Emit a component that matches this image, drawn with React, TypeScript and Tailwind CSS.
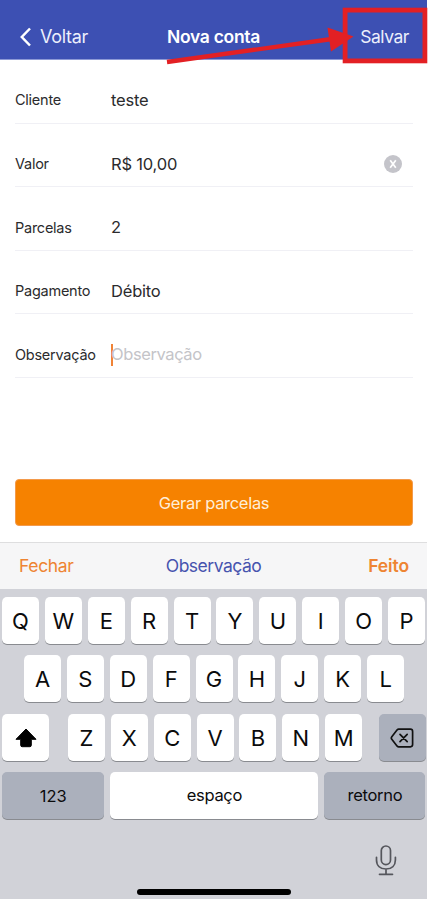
import React, { useState } from 'react';

interface Field {
    id: string;
    label: string;
    value: string;
    clearable?: boolean;
}

const fields: Field[] = [
    { id: 'cliente', label: 'Cliente', value: 'teste' },
    { id: 'valor', label: 'Valor', value: 'R$ 10,00', clearable: true },
    { id: 'parcelas', label: 'Parcelas', value: '2' },
    { id: 'pagamento', label: 'Pagamento', value: 'Débito' },
    { id: 'observacao', label: 'Observação', value: '' }
];

const Header = () => (
    <header className="relative flex h-[60px] items-start justify-between border-b border-[#8d99d6] bg-[#3d50b3] pt-[25px] pr-[18px] pl-5 text-[18px] leading-6 text-[#eceffc]">
        <button className="flex items-center gap-[9px] tracking-[-0.3px]">
            <svg width="11" height="20" viewBox="0 0 11 20" fill="none" stroke="white" strokeWidth="2.5">
                <path d="M10 1.5 1.8 10 10 18.5" />
            </svg>
            Voltar
        </button>
        <h1 className="absolute left-0 w-full text-center text-[17.5px] font-semibold tracking-[-0.3px] text-white">Nova conta</h1>
        <button className="relative text-[17.5px] tracking-[-0.45px]">Salvar</button>

        {/* Arrow and frame pointing at the save action */}
        <svg className="pointer-events-none absolute top-0 left-0" width="428" height="66" viewBox="0 0 428 66" fill="none">
            <rect x="345.1" y="10.1" width="79.8" height="50.8" stroke="#e32024" strokeWidth="4.8" />
            <path d="M167 62 332 39" stroke="#e32024" strokeWidth="4.4" />
            <path d="M327.5 27.5 353.5 36.5 331 51.5Z" fill="#e32024" />
        </svg>
    </header>
);

const FieldRow = ({ field, onClear }: { field: Field; onClear: () => void }) => (
    <div className="flex h-[63.6px] items-center border-b border-[#f0f0f5] pt-[18px] text-[#2b2b2d]">
        <label className="w-24 shrink-0 text-[14.5px] tracking-[-0.25px]">{field.label}</label>
        {field.value ? (
            <span className="text-[16.5px] tracking-[-0.2px]">{field.value}</span>
        ) : (
            <span className="flex items-center text-[16.5px] tracking-[-0.4px] text-[#c4c4c8]">
                <span className="-mr-0.5 h-[22px] w-0.5 bg-[#f08336]"></span>
                {field.label}
            </span>
        )}
        {field.clearable && field.value && (
            <button onClick={onClear} className="mr-[11px] ml-auto">
                <svg width="18" height="18" viewBox="0 0 18 18">
                    <circle cx="9" cy="9" r="9" fill="#c4c4ca" />
                    <path d="M6.2 5.2 11.8 12.8M11.8 5.2 6.2 12.8" stroke="white" strokeWidth="1.7" />
                </svg>
            </button>
        )}
    </div>
);

const Key = ({ children, className = 'w-[37px] bg-white pt-0.5 text-[22px]' }: { children: React.ReactNode; className?: string }) => (
    <button className={`flex h-[47px] shrink-0 items-center justify-center rounded-[5px] text-[#0b0b0c] shadow-[0_1px_0_#898b90] ${className}`}>
        {children}
    </button>
);

const Keyboard = () => (
    <div className="flex grow flex-col bg-[#d1d2d8] px-0.5 pt-2">
        <div className="flex flex-col gap-[11.4px]">
            <div className="flex gap-[5.9px]">
                {[...'QWERTYUIOP'].map((k) => <Key key={k}>{k}</Key>)}
            </div>
            <div className="flex gap-[5.9px] pl-[22px]">
                {[...'ASDFGHJKL'].map((k) => <Key key={k}>{k}</Key>)}
            </div>
            <div className="flex">
                <Key className="w-[47px] bg-white pt-px">
                    <svg width="22" height="20" viewBox="0 0 22 20">
                        <path d="M11 1 21 11.3H16.3V17.2Q16.3 18.7 14.8 18.7H7.2Q5.7 18.7 5.7 17.2V11.3H1Z" fill="black" stroke="black" strokeWidth="1" strokeLinejoin="round" />
                    </svg>
                </Key>
                <div className="mr-[16.8px] ml-[18.9px] flex gap-[5.9px]">
                    {[...'ZXCVBNM'].map((k) => <Key key={k}>{k}</Key>)}
                </div>
                <Key className="w-[46.5px] bg-[#abb0bc] pt-px">
                    <svg width="24" height="20" viewBox="0 0 24 20" fill="none" stroke="#111" strokeWidth="1.7" strokeLinejoin="round" strokeLinecap="round">
                        <path d="M8.6 1.2H20.4Q22.6 1.2 22.6 3.4V16.6Q22.6 18.8 20.4 18.8H8.6Q7.8 18.8 7.2 18.2L1.8 11.3Q.8 10 1.8 8.7L7.2 1.8Q7.8 1.2 8.6 1.2Z" />
                        <path d="M10 6.3 17.2 13.7M17.2 6.3 10 13.7" />
                    </svg>
                </Key>
            </div>
            <div className="flex gap-[6px]">
                <Key className="w-[102.4px] bg-[#abb0bc] pt-0.5 text-[16.5px]">123</Key>
                <Key className="w-[208px] bg-white text-[16.5px] tracking-[-0.3px]">espaço</Key>
                <Key className="w-[101px] bg-[#abb0bc] text-[16.5px] tracking-[-0.3px]">retorno</Key>
            </div>
        </div>
        <svg className="mt-[26px] mr-[28.5px] self-end" width="22" height="31" viewBox="0 0 22 31" fill="none" stroke="#55565c" strokeWidth="1.7" strokeLinecap="round">
            <rect x="6.3" y="1" width="9.2" height="18.6" rx="4.6" />
            <path d="M1.5 12.3V15C1.5 20.5 5.3 24 11 24S20.4 20.5 20.4 15V12.3M11 24V29.3M4.5 29.3H17.5" />
        </svg>
        <div className="mt-[13px] ml-[135px] h-[5.5px] w-[154px] rounded-full bg-black"></div>
    </div>
);

export default function App() {
    const [items, setItems] = useState(fields);

    const clear = (id: string) => setItems(items.map((f) => (f.id === id ? { ...f, value: '' } : f)));

    return (
        <div className="h-[899px] w-[428px] bg-white font-['Inter','Liberation_Sans',sans-serif]">
            <div className="flex h-full w-[427px] flex-col">
                <Header />
                <main className="flex h-[482px] shrink-0 flex-col pr-3.5 pl-[15px]">
                    {items.map((field) => (
                        <FieldRow key={field.id} field={field} onClear={() => clear(field.id)} />
                    ))}
                    <button className="mt-auto mb-4 h-[47px] rounded-[4px] border border-[#f39a4b] bg-[#f68200] pt-px text-[16.5px] tracking-[-0.3px] text-[#ffeed8]">
                        Gerar parcelas
                    </button>
                </main>
                <div className="relative flex h-[47px] shrink-0 items-center justify-between border-t border-[#dededf] bg-[#f6f6f7] pr-[18px] pl-[19px] text-[17.5px] tracking-[-0.35px] text-[#ee8432]">
                    <button>Fechar</button>
                    <span className="absolute left-0 w-full text-center tracking-[-0.5px] text-[#4653ae]">Observação</span>
                    <button className="relative font-semibold tracking-[-0.1px]">Feito</button>
                </div>
                <Keyboard />
            </div>
        </div>
    );
}
